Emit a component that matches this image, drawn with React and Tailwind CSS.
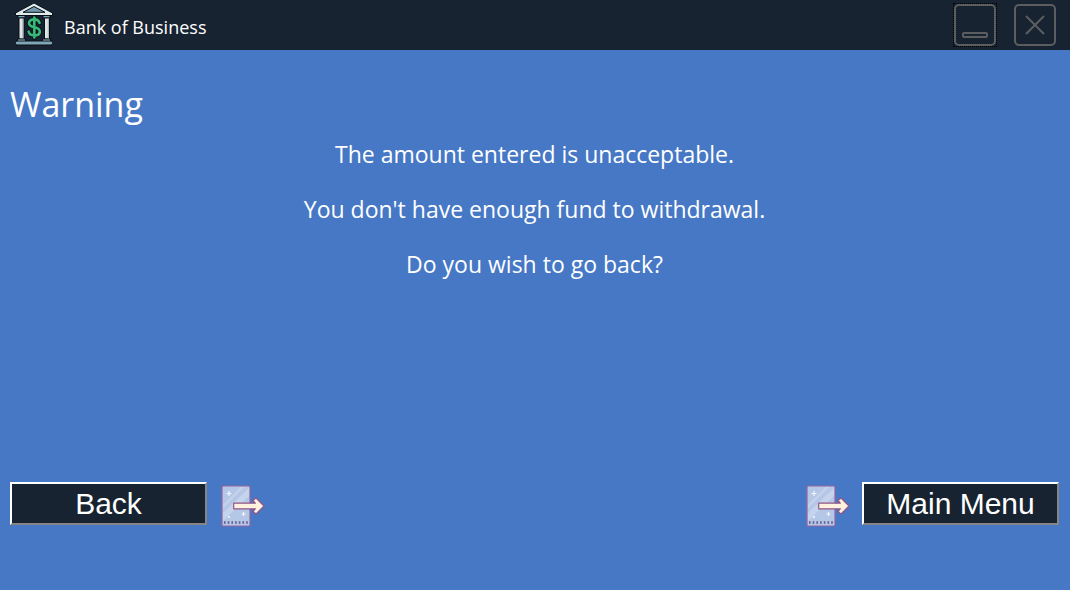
function BankLogo() {
  return (
    <svg className="h-11 w-10" viewBox="0 0 40 44" fill="none" aria-hidden="true">
      <g stroke="#080f16" strokeWidth="1" strokeLinejoin="round">
        <path d="M20 0 38.500 10v2.500h-37V10Z" fill="#dfeaec" />
        <path d="M20 3.500 31 9.300H9Z" fill="#7299ae" />
        <path d="M4 12.500h7v2.500H4zM29 12.500h7v2.500h-7z" fill="#7aa6b8" />
        <path d="M5 15h5v21H5zM30.500 15h5v21h-5z" fill="#dfe6e6" />
        <path d="M3.500 36h8v2.500h-8zM28.500 36h8v2.500h-8z" fill="#9bc0cb" />
        <rect x="1.500" y="38" width="37" height="4" rx="1.500" fill="#7fa6b8" />
      </g>
      <path d="M8.800 16v19.500M34.300 16v19.500" stroke="#a3b0b4" />
      <g strokeLinecap="round">
        <path d="M25.500 20c-.5-2.400-2.500-3.600-5.200-3.600-3.200 0-5.300 1.500-5.300 3.800s2 3.300 5.300 4 5.500 1.700 5.500 4.200-2.300 4-5.500 4-5.300-1.400-5.600-3.700M20.300 14.500v20" stroke="#080f16" strokeWidth="4.500" />
        <path d="M25.500 20c-.5-2.400-2.500-3.600-5.200-3.600-3.200 0-5.300 1.500-5.300 3.800s2 3.300 5.300 4 5.500 1.700 5.500 4.200-2.300 4-5.500 4-5.300-1.400-5.600-3.700M20.300 14.500v20" stroke="#37b878" strokeWidth="2.700" />
      </g>
    </svg>
  );
}

function ExitIcon() {
  return (
    <svg className="h-12 w-11 shrink-0" viewBox="0 -2 44 48" aria-hidden="true">
      <rect x="1" y="2" width="28" height="40" rx="1" fill="#b5c7e6" stroke="#94659f" strokeWidth="1.200" />
      <path d="M2 29 28 4v8L2 37ZM2 21 20 3h3L2 24Z" fill="#c5d3ec" />
      <path d="M8 7v5M5.500 9.500h5M22.500 28v4M20.500 30h4M8 32v2M7 33h2" stroke="#f2f6ff" strokeWidth="1.200" />
      <path d="M3 38.500h25" stroke="#655a91" strokeWidth="2.600" strokeDasharray="1.600 2.100" />
      <path d="M12.700 19.200h21.600l-2.300-2.700 3-2.500 8 8-8 8-3-2.500 2.300-2.700H12.700Z" fill="#fff2df" stroke="#935786" strokeWidth="1.200" strokeLinejoin="round" />
    </svg>
  );
}

function WindowButton({ label, focused, children }) {
  return (
    <button
      type="button"
      aria-label={label}
      className={`h-11 w-11 ${focused ? "outline-1 -outline-offset-1 outline-dotted outline-black" : ""}`}
    >
      <svg className="h-11 w-11" viewBox="0 0 44 44" fill="none" stroke="#5c5d5e" strokeWidth="2">
        <rect x="2" y="2" width="40" height="40" rx="4" />
        {children}
      </svg>
    </button>
  );
}

function ActionButton({ children }) {
  return (
    <button
      type="button"
      className="h-[43px] w-[197px] border-2 border-t-white border-r-[#858585] border-b-[#858585] border-l-white bg-[#172331] font-['Liberation_Sans',sans-serif] text-[30px] leading-9 text-white"
    >
      {children}
    </button>
  );
}

export default function App() {
  return (
    <div className="flex min-h-screen flex-col bg-[#4678c6] font-['Open_Sans',sans-serif] text-white">
      <header className="flex h-[50px] items-center justify-between bg-[#172331] pr-[13px] pl-3.5">
        <div className="flex items-center gap-2.5">
          <BankLogo />
          <span className="pt-1 text-lg">Bank of Business</span>
        </div>
        <div className="flex gap-4">
          <WindowButton label="Minimize" focused>
            <rect x="10" y="30" width="24" height="4" rx="1" />
          </WindowButton>
          <WindowButton label="Close">
            <path d="m13 13 18 18M31 13 13 31" />
          </WindowButton>
        </div>
      </header>
      <main className="flex flex-1 flex-col pt-[31px] pr-[11px] pb-15 pl-2.5">
        <h1 className="text-[34px] leading-[46px]">Warning</h1>
        <div className="flex flex-col text-center text-[23px] leading-[55px]">
          <p>The amount entered is unacceptable.</p>
          <p>You don't have enough fund to withdrawal.</p>
          <p>Do you wish to go back?</p>
        </div>
        <div className="mt-auto flex justify-between">
          <div className="flex items-start gap-3.5">
            <ActionButton>Back</ActionButton>
            <ExitIcon />
          </div>
          <div className="flex items-start gap-3">
            <ExitIcon />
            <ActionButton>Main Menu</ActionButton>
          </div>
        </div>
      </main>
    </div>
  );
}
